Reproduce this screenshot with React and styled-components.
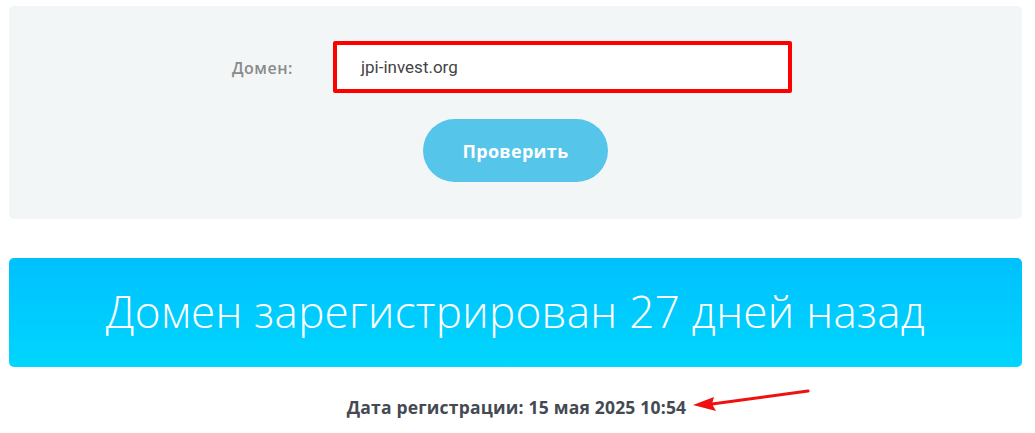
import React from "react";
import styled, { createGlobalStyle } from "styled-components";

const Global = createGlobalStyle`
  html, body { margin: 0; padding: 0; background: #ffffff; }
  body { font-family: "Open Sans", "Liberation Sans", sans-serif; }
  * { box-sizing: border-box; }
`;

const Page = styled.div`
  width: 1035px;
  padding: 6px 13px 0 9px;
  display: flex;
  flex-direction: column;
`;

const FormPanel = styled.div`
  background: #f3f6f7;
  border-radius: 5px;
  height: 213px;
  padding-top: 35px;
  display: flex;
  flex-direction: column;
  align-items: center;
`;

const FieldRow = styled.div`
  display: flex;
  align-items: center;
  width: 100%;
  padding-left: 223px;
`;

const Label = styled.label`
  width: 101px;
  font-family: "Open Sans", sans-serif;
  font-weight: 600;
  font-size: 16px;
  letter-spacing: 0.5px;
  color: #8a8a8a;
  padding-top: 2px;
`;

const Input = styled.div`
  width: 459px;
  height: 52px;
  border: 4px solid #ff0000;
  border-radius: 2px;
  background: #ffffff;
  display: flex;
  align-items: center;
  padding-left: 24px;
  font-family: "Roboto", "Liberation Sans", sans-serif;
  font-size: 17px;
  color: #444444;
`;

const Button = styled.button`
  margin-top: 26px;
  width: 185px;
  height: 63px;
  border: none;
  border-radius: 32px;
  background: #55c5ea;
  color: #ffffff;
  font-family: "Open Sans", sans-serif;
  font-weight: 700;
  font-size: 18px;
  letter-spacing: 0.3px;
  cursor: pointer;
`;

const Banner = styled.div`
  margin-top: 39px;
  height: 109px;
  border-radius: 5px;
  background: linear-gradient(180deg, #00c0fe 0%, #00d6fe 100%);
  display: flex;
  align-items: center;
  justify-content: center;
  padding-bottom: 3px;
  color: #ffffff;
  font-family: "Open Sans", sans-serif;
  font-weight: 300;
  font-size: 44px;
  letter-spacing: 0.3px;
`;

const DateLine = styled.div`
  height: 66px;
  display: flex;
  align-items: center;
  justify-content: center;
  padding-top: 14px;
  font-family: "Open Sans", sans-serif;
  font-weight: 700;
  font-size: 17.5px;
  letter-spacing: 0.2px;
  color: #444a52;
`;

const DateText = styled.span`
  position: relative;
  margin-left: 2px;
`;

const Arrow = styled.svg`
  position: absolute;
  left: 100%;
  top: -10px;
  margin-left: 4px;
`;

export default function App() {
  return (
    <>
      <Global />
      <Page>
        <FormPanel>
          <FieldRow>
            <Label>Домен:</Label>
            <Input>jpi-invest.org</Input>
          </FieldRow>
          <Button>Проверить</Button>
        </FormPanel>
        <Banner>Домен зарегистрирован 27 дней назад</Banner>
        <DateLine>
          <DateText>
            Дата регистрации: 15 мая 2025 10:54
            <Arrow width="120" height="30" viewBox="0 0 120 30">
              <path d="M118 6 L22 19" stroke="#f01010" strokeWidth="3" strokeLinecap="round" fill="none" />
              <path d="M3 20 L24 12 L22 19 L26 26 Z" fill="#f01010" />
            </Arrow>
          </DateText>
        </DateLine>
      </Page>
    </>
  );
}
